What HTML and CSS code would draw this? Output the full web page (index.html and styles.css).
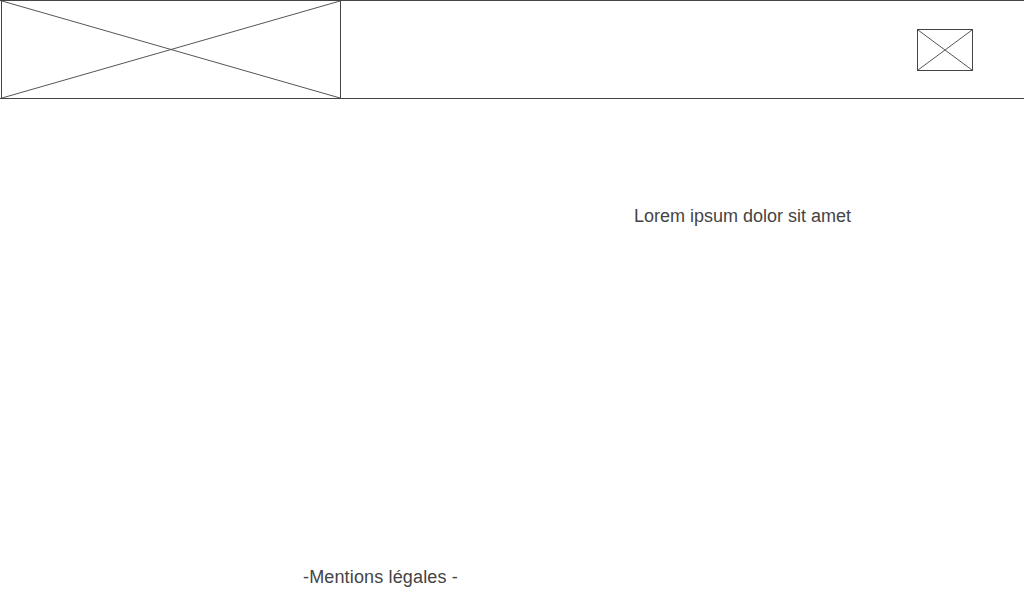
FILE: index.html
```html
<!DOCTYPE html>
<html lang="fr">
<head>
<meta charset="utf-8">
<title>Maquette</title>
<link rel="stylesheet" href="styles.css">
</head>
<body>
<header class="header">
  <div class="logo">
    <svg class="ph" viewBox="0 0 338 96" preserveAspectRatio="none">
      <line x1="0" y1="0" x2="338" y2="96"/>
      <line x1="0" y1="96" x2="338" y2="0"/>
    </svg>
  </div>
  <div class="icon">
    <svg class="ph" viewBox="0 0 54 40" preserveAspectRatio="none">
      <line x1="0" y1="0" x2="54" y2="40"/>
      <line x1="0" y1="40" x2="54" y2="0"/>
    </svg>
  </div>
</header>
<main class="main">
  <div class="side"></div>
  <div class="content">
    <p class="lead">Lorem ipsum dolor sit amet</p>
  </div>
</main>
<footer class="footer">
  <p class="legal">-Mentions légales -</p>
</footer>
</body>
</html>
```

FILE: styles.css
```css
html, body {
  margin: 0;
  padding: 0;
  background: #fff;
}
body {
  width: 1024px;
  height: 600px;
  font-family: "Liberation Sans", Arial, sans-serif;
  color: #444;
  display: flex;
  flex-direction: column;
  overflow: hidden;
}
.header {
  display: flex;
  align-items: center;
  height: 97px;
  border-top: 1px solid #444;
  border-bottom: 1px solid #444;
  flex: none;
}
.logo {
  align-self: stretch;
  margin-left: 1px;
  width: 338px;
  border-left: 1px solid #444;
  border-right: 1px solid #444;
}
.icon {
  margin-left: 576px;
  margin-top: 0;
  width: 54px;
  height: 40px;
  border: 1px solid #444;
}
.ph {
  display: block;
  width: 100%;
  height: 100%;
}
.ph line {
  stroke: #555;
  stroke-width: 1;
  vector-effect: non-scaling-stroke;
}
.main {
  flex: 1;
  display: grid;
  grid-template-columns: 634px 1fr;
}
.lead {
  margin: 106px 0 0;
  font-size: 18px;
  line-height: 22px;
}
.footer {
  flex: none;
  height: 34px;
}
.legal {
  margin: 0 0 0 303px;
  font-size: 18px;
  line-height: 22px;
  letter-spacing: 0.15px;
}
```
